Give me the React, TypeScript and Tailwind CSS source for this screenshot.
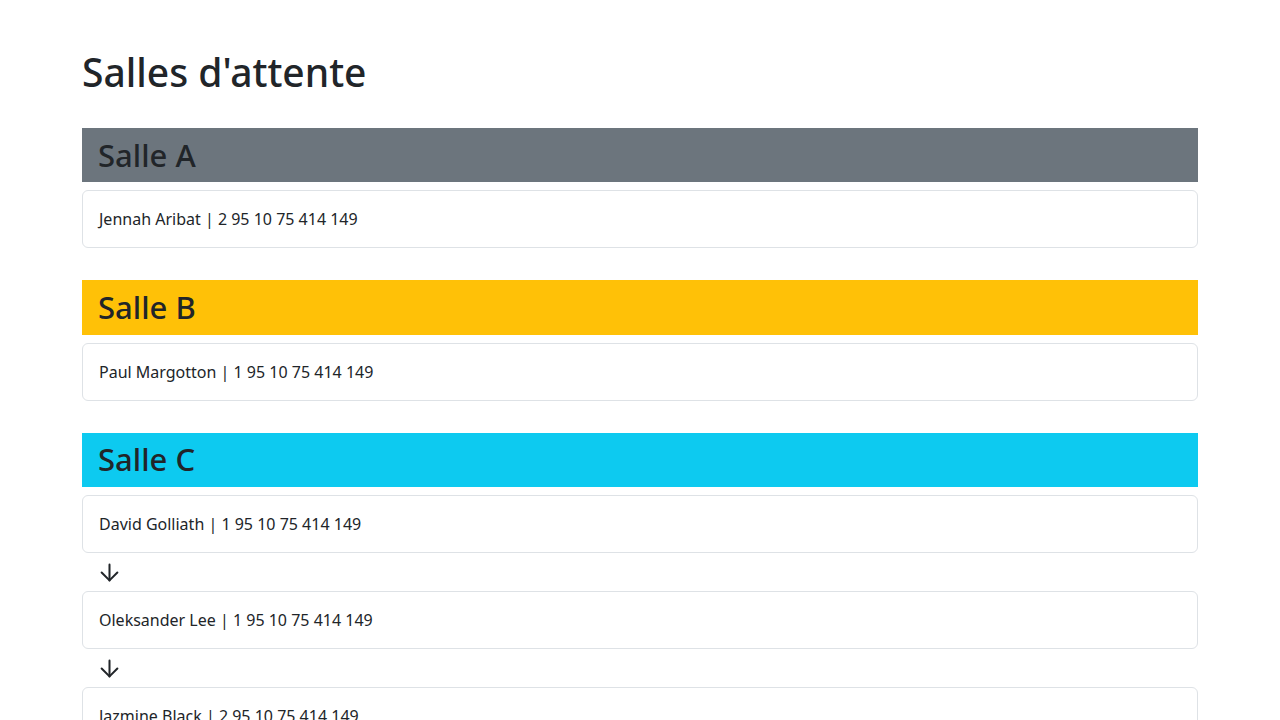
import { ArrowDown } from 'lucide-react';

interface Patient {
  name: string;
  number: string;
}

interface Room {
  title: string;
  bg: string;
  patients: Patient[];
}

const rooms: Room[] = [
  {
    title: 'Salle A',
    bg: 'bg-[#6c757d]',
    patients: [{ name: 'Jennah Aribat', number: '2 95 10 75 414 149' }],
  },
  {
    title: 'Salle B',
    bg: 'bg-[#ffc107]',
    patients: [{ name: 'Paul Margotton', number: '1 95 10 75 414 149' }],
  },
  {
    title: 'Salle C',
    bg: 'bg-[#0dcaf0]',
    patients: [
      { name: 'David Golliath', number: '1 95 10 75 414 149' },
      { name: 'Oleksander Lee', number: '1 95 10 75 414 149' },
      { name: 'Jazmine Black', number: '2 95 10 75 414 149' },
    ],
  },
];

export default function App() {
  return (
    <div className="min-h-screen bg-white text-[#212529] font-['Noto_Sans',sans-serif]">
      <div className="mx-auto w-[1140px] px-3 pt-12 pb-10">
        <h1 className="text-[39px] leading-[48px] font-medium mb-8">Salles d'attente</h1>

        <div className="flex flex-col gap-8">
          {rooms.map((room) => (
            <section key={room.title}>
              <h2 className={`${room.bg} h-[54.4px] px-4 flex items-center text-[31px] font-medium leading-none mb-2`}>
                {room.title}
              </h2>
              <div className="flex flex-col">
                {room.patients.map((p, i) => (
                  <div key={p.name}>
                    {i > 0 && (
                      <div className="h-[38px] flex items-center pl-[14px]">
                        <ArrowDown className="w-[27px] h-[27px] text-[#212529]" strokeWidth={1.8} />
                      </div>
                    )}
                    <div className="border border-[#dee2e6] rounded-md px-4 py-4 text-[16px] leading-6">
                      {p.name} | {p.number}
                    </div>
                  </div>
                ))}
              </div>
            </section>
          ))}
        </div>
      </div>
    </div>
  );
}
